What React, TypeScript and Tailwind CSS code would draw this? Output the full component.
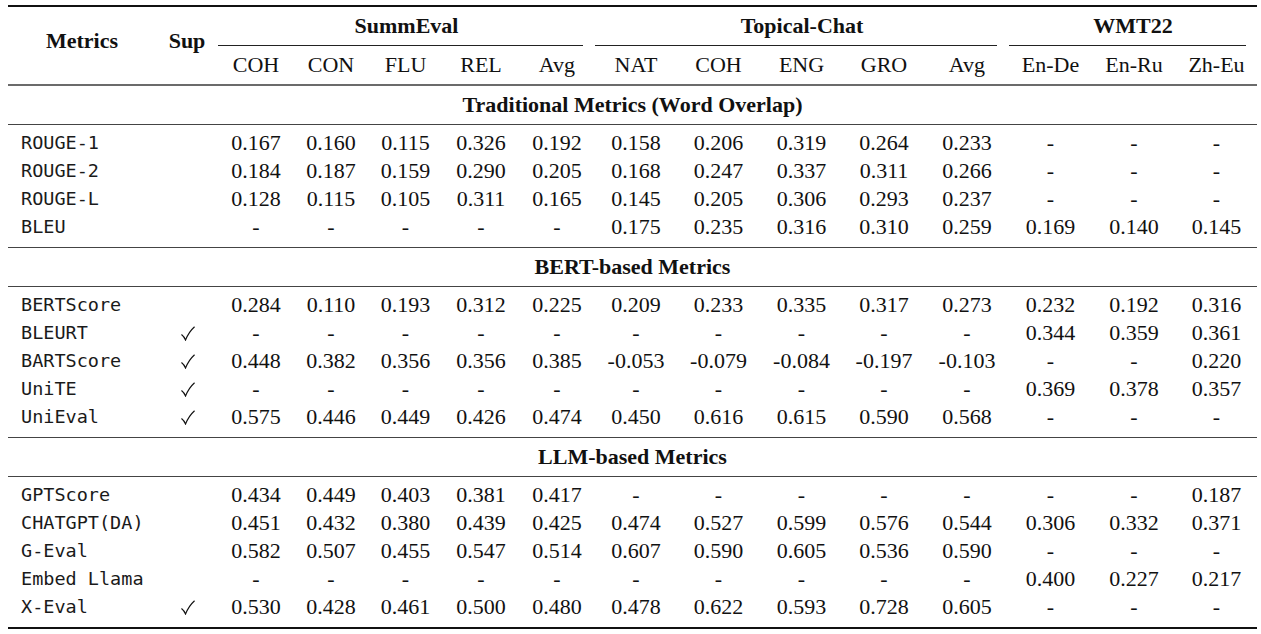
import React from 'react';

const cols = 'grid grid-cols-[148px_62px_76px_74px_75px_76px_76px_82px_83px_83px_82px_84px_83px_84px_81px]';

type Row = { name: string; sup?: boolean; v: string[] };

const sections: { title: string; rows: Row[] }[] = [
  {
    title: 'Traditional Metrics (Word Overlap)',
    rows: [
      { name: 'ROUGE-1', v: ['0.167', '0.160', '0.115', '0.326', '0.192', '0.158', '0.206', '0.319', '0.264', '0.233', '-', '-', '-'] },
      { name: 'ROUGE-2', v: ['0.184', '0.187', '0.159', '0.290', '0.205', '0.168', '0.247', '0.337', '0.311', '0.266', '-', '-', '-'] },
      { name: 'ROUGE-L', v: ['0.128', '0.115', '0.105', '0.311', '0.165', '0.145', '0.205', '0.306', '0.293', '0.237', '-', '-', '-'] },
      { name: 'BLEU', v: ['-', '-', '-', '-', '-', '0.175', '0.235', '0.316', '0.310', '0.259', '0.169', '0.140', '0.145'] },
    ],
  },
  {
    title: 'BERT-based Metrics',
    rows: [
      { name: 'BERTScore', v: ['0.284', '0.110', '0.193', '0.312', '0.225', '0.209', '0.233', '0.335', '0.317', '0.273', '0.232', '0.192', '0.316'] },
      { name: 'BLEURT', sup: true, v: ['-', '-', '-', '-', '-', '-', '-', '-', '-', '-', '0.344', '0.359', '0.361'] },
      { name: 'BARTScore', sup: true, v: ['0.448', '0.382', '0.356', '0.356', '0.385', '-0.053', '-0.079', '-0.084', '-0.197', '-0.103', '-', '-', '0.220'] },
      { name: 'UniTE', sup: true, v: ['-', '-', '-', '-', '-', '-', '-', '-', '-', '-', '0.369', '0.378', '0.357'] },
      { name: 'UniEval', sup: true, v: ['0.575', '0.446', '0.449', '0.426', '0.474', '0.450', '0.616', '0.615', '0.590', '0.568', '-', '-', '-'] },
    ],
  },
  {
    title: 'LLM-based Metrics',
    rows: [
      { name: 'GPTScore', v: ['0.434', '0.449', '0.403', '0.381', '0.417', '-', '-', '-', '-', '-', '-', '-', '0.187'] },
      { name: 'CHATGPT(DA)', v: ['0.451', '0.432', '0.380', '0.439', '0.425', '0.474', '0.527', '0.599', '0.576', '0.544', '0.306', '0.332', '0.371'] },
      { name: 'G-Eval', v: ['0.582', '0.507', '0.455', '0.547', '0.514', '0.607', '0.590', '0.605', '0.536', '0.590', '-', '-', '-'] },
      { name: 'Embed Llama', v: ['-', '-', '-', '-', '-', '-', '-', '-', '-', '-', '0.400', '0.227', '0.217'] },
      { name: 'X-Eval', sup: true, v: ['0.530', '0.428', '0.461', '0.500', '0.480', '0.478', '0.622', '0.593', '0.728', '0.605', '-', '-', '-'] },
    ],
  },
];

const subHeads = ['COH', 'CON', 'FLU', 'REL', 'Avg', 'NAT', 'COH', 'ENG', 'GRO', 'Avg', 'En-De', 'En-Ru', 'Zh-Eu'];

const Check = () => (
  <svg width="15" height="15" viewBox="0 0 13 13" fill="none">
    <path d="M1.5 7.6 Q3.6 9.2 4.8 12.2 Q7.6 5.2 12.4 0.9" stroke="#111" strokeWidth="1" strokeLinecap="round" />
  </svg>
);

export default function App() {
  return (
    <div className="min-h-screen bg-white text-[#111] font-['Liberation_Serif',serif] text-[22px] leading-none">
      <div className="ml-[8px] w-[1249px] pt-[5px]">
        <div className="h-[2px] bg-[#111]" />

        {/* header */}
        <div className={`${cols} grid-rows-[39px_38px] font-bold`}>
          <div className="row-span-2 flex items-center justify-center pb-[10px]">Metrics</div>
          <div className="row-span-2 flex items-center justify-center pb-[10px]">Sup</div>
          <div className="col-span-5 flex items-center justify-center border-b border-[#222] mr-[12px] pl-[12px]">SummEval</div>
          <div className="col-span-5 flex items-center justify-center border-b border-[#222] mr-[12px] pl-[12px]">Topical-Chat</div>
          <div className="col-span-3 flex items-center justify-center border-b border-[#222] mr-[11px] pl-[11px]">WMT22</div>
          {subHeads.map((h, i) => (
            <div key={i} className="flex items-center justify-center font-normal">
              {h}
            </div>
          ))}
        </div>
        <div className="h-[2px] bg-[#6b6b6b]" />

        {sections.map((s, si) => (
          <div key={s.title}>
            {si > 0 && <div className="h-px bg-[#444]" />}
            <div className="h-[38px] flex items-center justify-center font-bold">{s.title}</div>
            <div className="h-px bg-[#444]" />
            <div className="pt-[4px] pb-[6px]">
              {s.rows.map((r) => (
                <div key={r.name} className={`${cols} h-[28px] items-center`}>
                  <div className="pl-[13px] font-['DejaVu_Sans_Mono',monospace] text-[18.5px] text-[#1a1a1a]">{r.name}</div>
                  <div className="flex justify-center">{r.sup && <Check />}</div>
                  {r.v.map((x, i) => (
                    <div key={i} className="text-center">
                      {x}
                    </div>
                  ))}
                </div>
              ))}
            </div>
          </div>
        ))}
        <div className="h-[2px] bg-[#111]" />
      </div>
    </div>
  );
}
